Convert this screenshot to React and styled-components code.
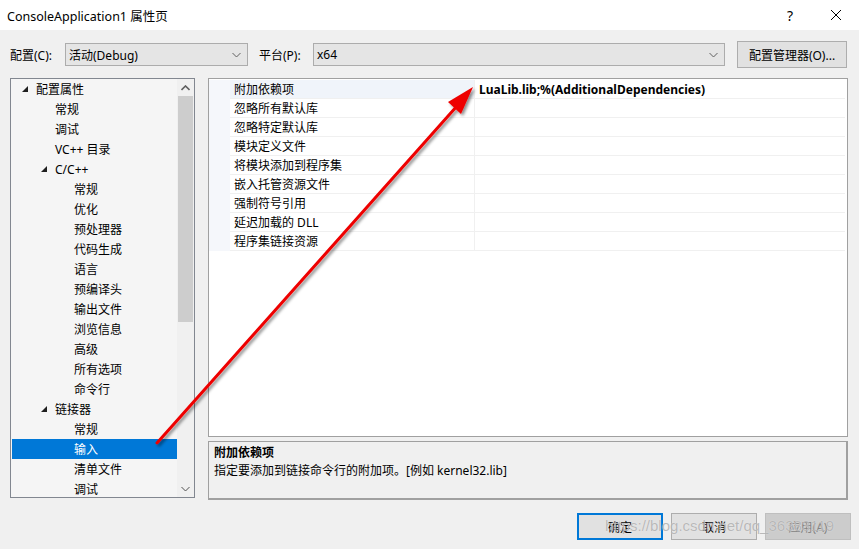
import React from 'react'
import styled, { createGlobalStyle } from 'styled-components'

const GlobalStyle = createGlobalStyle`
  html, body { margin: 0; padding: 0; background: #f0f0f0; }
  body {
    font-family: "Noto Sans", "Noto Sans CJK SC", sans-serif;
    font-size: 12px;
    color: #000;
  }
`

const Window = styled.div`
  position: relative;
  width: 859px;
  height: 549px;
  background: #f0f0f0;
  overflow: hidden;
`

const TitleBar = styled.div`
  height: 30px;
  background: #fff;
  display: flex;
  align-items: center;
  padding-left: 7px;
`

const Title = styled.div`
  flex: 1;
  font-size: 12.5px;
`

const TitleButton = styled.div`
  width: 46px;
  height: 30px;
  display: flex;
  align-items: center;
  justify-content: center;
  font-size: 14px;
`

const Toolbar = styled.div`
  display: flex;
  align-items: center;
  height: 27px;
  padding: 11px 0 10px 10px;
`

const Label = styled.span`
  width: ${p => p.$w}px;
  white-space: nowrap;
`

const Combo = styled.div`
  box-sizing: border-box;
  width: ${p => p.$w}px;
  height: 23px;
  background: #e5e5e5;
  border: 1px solid #acacac;
  display: flex;
  align-items: center;
  padding: 0 6px 0 3px;
  margin-right: ${p => p.$mr}px;
  span { flex: 1; }
`

const Button = styled.div`
  box-sizing: border-box;
  width: ${p => p.$w}px;
  height: ${p => p.$h}px;
  background: ${p => (p.$disabled ? '#cccccc' : '#e1e1e1')};
  color: ${p => (p.$disabled ? '#838383' : '#000')};
  border: ${p => (p.$default ? '2px solid #0078d7' : `1px solid ${p.$disabled ? '#bfbfbf' : '#adadad'}`)};
  display: flex;
  align-items: center;
  justify-content: center;
`

const Main = styled.div`
  display: flex;
  padding-left: 10px;
  gap: 13px;
`

const Tree = styled.div`
  box-sizing: border-box;
  width: 185px;
  height: 420px;
  border: 1px solid #828790;
  background: #f5f5f5;
  display: flex;
  overflow: hidden;
`

const TreeList = styled.div`
  flex: 1;
  padding-left: 1px;
`

const TreeRow = styled.div`
  height: 20px;
  display: flex;
  align-items: center;
  position: relative;
  padding-left: ${p => 24 + p.$level * 19}px;
  background: ${p => (p.$selected ? '#0078d7' : 'transparent')};
  color: ${p => (p.$selected ? '#fff' : '#000')};
  white-space: nowrap;
`

const Toggle = styled.svg`
  position: absolute;
  left: ${p => 10 + p.$level * 19}px;
  top: 7px;
`

const ScrollBar = styled.div`
  width: 17px;
  background: #f0f0f0;
  display: flex;
  flex-direction: column;
  align-items: center;
`

const ScrollArrow = styled.div`
  height: 17px;
  display: flex;
  align-items: center;
  justify-content: center;
`

const Thumb = styled.div`
  width: 15px;
  height: 226px;
  background: #cdcdcd;
`

const RightCol = styled.div`
  display: flex;
  flex-direction: column;
  gap: 4px;
`

const Grid = styled.div`
  box-sizing: border-box;
  width: 640px;
  height: 359px;
  border: 1px solid #a0a0a0;
  background: #fff;
  padding-top: 1px;
`

const GridRow = styled.div`
  display: grid;
  grid-template-columns: 21px 245px 1fr;
  height: 19px;
`

const Gutter = styled.div`
  background: #f5f7fb;
`

const NameCell = styled.div`
  background: ${p => (p.$active ? '#f0f4fa' : '#fff')};
  border-bottom: 1px solid #f0f0f0;
  border-right: 1px solid #f0f0f0;
  padding-left: 4px;
  display: flex;
  align-items: center;
`

const ValueCell = styled.div`
  border-bottom: 1px solid #f0f0f0;
  padding-left: 4px;
  display: flex;
  align-items: center;
  font-weight: bold;
  margin-right: 2px;
`

const Description = styled.div`
  box-sizing: border-box;
  width: 640px;
  height: 59px;
  border: 1px solid #a0a0a0;
  border-right-width: 2px;
  border-bottom-width: 2px;
  padding: 2px 5px;
  line-height: 18px;
`

const DescTitle = styled.div`
  font-weight: bold;
`

const Footer = styled.div`
  display: flex;
  justify-content: flex-end;
  gap: 8px;
  padding: 13px 8px 0 0;
`

const Overlay = styled.svg`
  position: absolute;
  left: 0;
  top: 0;
  pointer-events: none;
`

const Watermark = styled.div`
  position: absolute;
  left: 605px;
  top: 517px;
  font-family: "Liberation Sans", Arial, sans-serif;
  font-size: 15px;
  color: rgba(165, 165, 165, 0.75);
  text-shadow: 0 0 1px rgba(255, 255, 255, 0.7);
  white-space: nowrap;
  pointer-events: none;
`

const treeItems = [
  { t: '配置属性', l: 0, open: true },
  { t: '常规', l: 1 },
  { t: '调试', l: 1 },
  { t: 'VC++ 目录', l: 1 },
  { t: 'C/C++', l: 1, open: true },
  { t: '常规', l: 2 },
  { t: '优化', l: 2 },
  { t: '预处理器', l: 2 },
  { t: '代码生成', l: 2 },
  { t: '语言', l: 2 },
  { t: '预编译头', l: 2 },
  { t: '输出文件', l: 2 },
  { t: '浏览信息', l: 2 },
  { t: '高级', l: 2 },
  { t: '所有选项', l: 2 },
  { t: '命令行', l: 2 },
  { t: '链接器', l: 1, open: true },
  { t: '常规', l: 2 },
  { t: '输入', l: 2, sel: true },
  { t: '清单文件', l: 2 },
  { t: '调试', l: 2 },
]

const props = [
  '附加依赖项',
  '忽略所有默认库',
  '忽略特定默认库',
  '模块定义文件',
  '将模块添加到程序集',
  '嵌入托管资源文件',
  '强制符号引用',
  '延迟加载的 DLL',
  '程序集链接资源',
]

const Chevron = ({ up, color = '#606060' }) => (
  <svg width="9" height="6" viewBox="0 0 9 6">
    <polyline
      points={up ? '0.5,5 4.5,1 8.5,5' : '0.5,1 4.5,5 8.5,1'}
      fill="none"
      stroke={color}
      strokeWidth={up ? 1.6 : 1}
    />
  </svg>
)

const App = () => {
  return (
    <Window>
      <GlobalStyle />
      <TitleBar>
        <Title>ConsoleApplication1 属性页</Title>
        <TitleButton>?</TitleButton>
        <TitleButton>
          <svg width="12" height="12" viewBox="0 0 12 12">
            <path d="M1 1L11 11M11 1L1 11" stroke="#000" strokeWidth="1" />
          </svg>
        </TitleButton>
      </TitleBar>

      <Toolbar>
        <Label $w={55}>配置(C):</Label>
        <Combo $w={183} $mr={11}>
          <span>活动(Debug)</span>
          <Chevron />
        </Combo>
        <Label $w={54}>平台(P):</Label>
        <Combo $w={412} $mr={12}>
          <span>x64</span>
          <Chevron />
        </Combo>
        <Button $w={110} $h={27}>配置管理器(O)...</Button>
      </Toolbar>

      <Main>
        <Tree>
          <TreeList>
            {treeItems.map((it, i) => (
              <TreeRow key={i} $level={it.l} $selected={it.sel}>
                {it.open && (
                  <Toggle $level={it.l} width="7" height="7" viewBox="0 0 7 7">
                    <polygon points="6,0 6,6 0,6" fill="#1e1e1e" />
                  </Toggle>
                )}
                {it.t}
              </TreeRow>
            ))}
          </TreeList>
          <ScrollBar>
            <ScrollArrow><Chevron up /></ScrollArrow>
            <Thumb />
            <div style={{ flex: 1 }} />
            <ScrollArrow><Chevron color="#505050" /></ScrollArrow>
          </ScrollBar>
        </Tree>

        <RightCol>
          <Grid>
            {props.map((p, i) => (
              <GridRow key={i}>
                <Gutter />
                <NameCell $active={i === 0}>{p}</NameCell>
                <ValueCell>{i === 0 ? 'LuaLib.lib;%(AdditionalDependencies)' : ''}</ValueCell>
              </GridRow>
            ))}
          </Grid>
          <Description>
            <DescTitle>附加依赖项</DescTitle>
            <div>指定要添加到链接命令行的附加项。[例如 kernel32.lib]</div>
          </Description>
        </RightCol>
      </Main>

      <Footer>
        <Button $w={86} $h={27} $default>确定</Button>
        <Button $w={86} $h={27}>取消</Button>
        <Button $w={86} $h={27} $disabled>应用(A)</Button>
      </Footer>

      <Watermark>https://blog.csdn.net/qq_36383119</Watermark>

      <Overlay width="859" height="549">
        <defs>
          <filter id="shadow" x="-10%" y="-10%" width="120%" height="120%">
            <feDropShadow dx="2" dy="2" stdDeviation="1.5" floodColor="#000" floodOpacity="0.45" />
          </filter>
        </defs>
        <g filter="url(#shadow)">
          <line x1="157" y1="443" x2="457" y2="106" stroke="#ee0000" strokeWidth="3" strokeLinecap="round" />
          <polygon points="473,87 461,114 448,102" fill="#ee0000" />
        </g>
      </Overlay>
    </Window>
  )
}

export default App
